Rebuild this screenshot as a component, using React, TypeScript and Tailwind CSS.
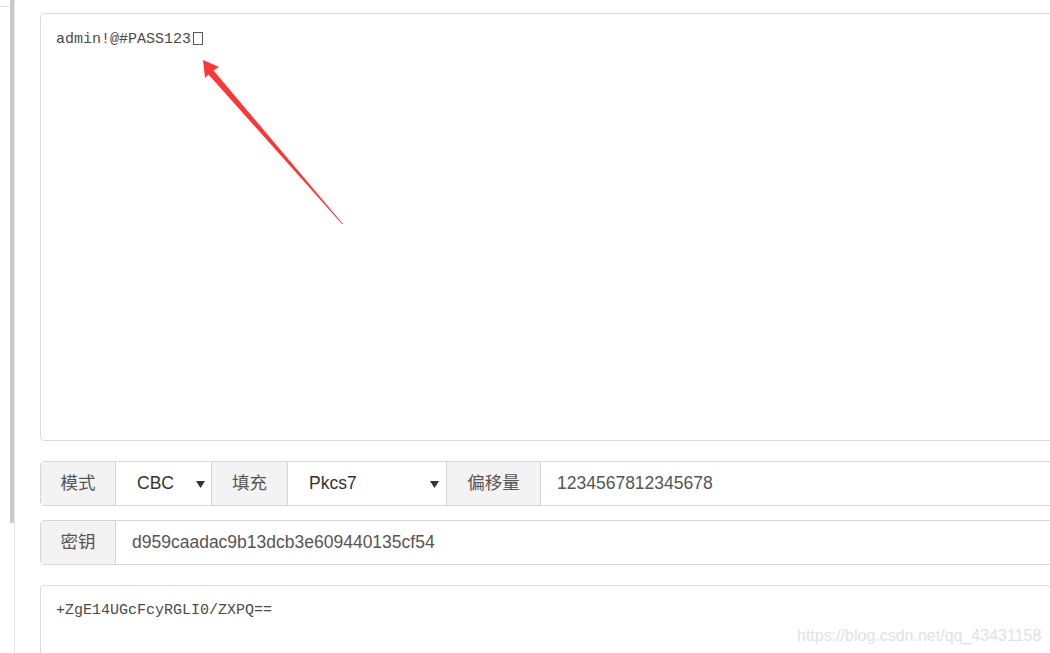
import React from "react";

const cjk = '"Liberation Sans", "Noto Sans CJK SC", sans-serif';
const mono = '"Liberation Mono", "Noto Sans CJK SC", monospace';

function Caret() {
  return (
    <svg width="9" height="8" viewBox="0 0 9 8" className="shrink-0">
      <polygon points="0,1 9,1 4.5,8" fill="#333" />
    </svg>
  );
}

function Label({ text, w }: { text: string; w: string }) {
  return (
    <div
      className={`${w} shrink-0 flex items-center justify-center bg-[#f3f3f3] border-r border-[#d6d6d6] text-[17.5px] text-[#555]`}
    >
      {text}
    </div>
  );
}

export default function App() {
  return (
    <div
      className="relative flex h-[653px] w-[1050px] overflow-hidden bg-white"
      style={{ fontFamily: cjk }}
    >
      {/* left edge */}
      <div className="w-[10px] shrink-0">
        <div className="mt-[6px] border-t border-[#e3e3e3]" />
      </div>
      <div className="w-[4px] shrink-0">
        <div className="h-[523px] bg-[#c9c9c9]" />
      </div>
      <div className="w-px shrink-0 bg-[#e6e6e6]" />

      {/* main */}
      <div className="ml-[25px] w-[1100px] shrink-0 flex flex-col">
        <div
          className="mt-[13px] h-[428px] shrink-0 rounded-[4px] border border-[#dcdcdc] px-[15px] pt-[16px] text-[15px] leading-[20px] text-[#4a4a4a]"
          style={{ fontFamily: mono }}
        >
          admin!@#PASS123
          <span className="ml-[2px] inline-block h-[13px] w-[10px] border border-[#556] align-[-2px]" />
        </div>

        <div className="mt-[20px] flex h-[45px] shrink-0 rounded-[4px] border border-[#d6d6d6]">
          <Label text="模式" w="w-[75px]" />
          <div className="w-[96px] shrink-0 flex items-center pl-[21px] pr-[6px] border-r border-[#d6d6d6] text-[17.5px] text-[#333]">
            <span className="flex-1">CBC</span>
            <Caret />
          </div>
          <Label text="填充" w="w-[76px]" />
          <div className="w-[159px] shrink-0 flex items-center pl-[21px] pr-[7px] border-r border-[#d6d6d6] text-[17.5px] text-[#333]">
            <span className="flex-1">Pkcs7</span>
            <Caret />
          </div>
          <Label text="偏移量" w="w-[94px]" />
          <div className="flex-1 flex items-center pl-[16px] text-[17.5px] text-[#555]">
            1234567812345678
          </div>
        </div>

        <div className="mt-[14px] flex h-[45px] shrink-0 rounded-[4px] border border-[#d6d6d6]">
          <Label text="密钥" w="w-[75px]" />
          <div className="flex-1 flex items-center pl-[16px] text-[17.5px] text-[#555]">
            d959caadac9b13dcb3e609440135cf54
          </div>
        </div>

        <div
          className="mt-[20px] h-[120px] w-[1011px] shrink-0 rounded-[4px] border border-[#dcdcdc] px-[15px] pt-[15px] text-[15px] leading-[20px] text-[#4a4a4a]"
          style={{ fontFamily: mono }}
        >
          +ZgE14UGcFcyRGLI0/ZXPQ==
        </div>
      </div>

      {/* annotation arrow */}
      <svg
        className="pointer-events-none absolute left-0 top-0"
        width="1050"
        height="653"
        viewBox="0 0 1050 653"
      >
        <polygon
          points="203,60 219,67 213.5,70.5 343,224 342,224 208.5,74.5 205,78"
          fill="#ff3636"
        />
      </svg>

      {/* watermark */}
      <div className="absolute left-[797px] top-[624px] text-[16px] text-[#e2e2e2]" style={{ fontFamily: cjk }}>
        https://blog.csdn.net/qq_43431158
      </div>
    </div>
  );
}
